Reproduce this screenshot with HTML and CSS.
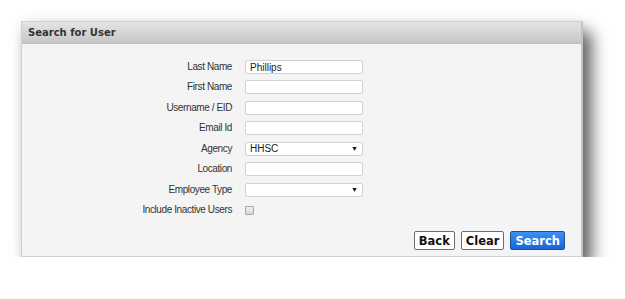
FILE: index.html
```html
<!DOCTYPE html>
<html>

<head>
    <title>Search for User</title>
    <link rel="stylesheet" href="styles.css">
</head>

<body>
    <div class="panel">
        <div class="panel-head">Search for User</div>
        <div class="panel-body">
            <form class="search-form">
                <label for="lastName">Last Name</label>
                <input type="text" id="lastName" value="Phillips">

                <label for="firstName">First Name</label>
                <input type="text" id="firstName">

                <label for="eid">Username / EID</label>
                <input type="text" id="eid">

                <label for="email">Email Id</label>
                <input type="text" id="email">

                <label for="agency">Agency</label>
                <div class="select" id="agency">HHSC<span class="arrow">&#9660;</span></div>

                <label for="location">Location</label>
                <input type="text" id="location">

                <label for="empType">Employee Type</label>
                <div class="select" id="empType"><span class="arrow">&#9660;</span></div>

                <label for="inactive">Include Inactive Users</label>
                <div class="check-cell"><span class="checkbox" id="inactive"></span></div>
            </form>
            <div class="actions">
                <button class="btn">Back</button>
                <button class="btn">Clear</button>
                <button class="btn btn-primary">Search</button>
            </div>
        </div>
    </div>
</body>

</html>
```

FILE: styles.css
```css
body {
    margin: 0;
    background-color: #fff;
    font-family: "Liberation Sans", Arial, sans-serif;
    color: #333;
}

.panel {
    margin: 21px 0 0 21px;
    width: 559px;
    border: 1px solid #d0d0d0;
    border-right: 2px solid #c4c4c4;
    background-color: #f4f4f4;
    box-shadow: 9px 11px 15px rgba(0, 0, 0, 0.6), 0 0 12px rgba(0, 0, 0, 0.08);
}

.panel-head {
    height: 21px;
    line-height: 21px;
    padding-left: 6px;
    background: linear-gradient(#e4e4e4, #c6c6c6);
    border-bottom: 1px solid #bdbdbd;
    font-family: "DejaVu Sans", Verdana, sans-serif;
    font-weight: bold;
    font-size: 10px;
    color: #333;
}

.panel-body {
    padding: 16px 16px 6px 0;
}

.search-form {
    display: grid;
    grid-template-columns: 210px 118px;
    grid-auto-rows: 20.43px;
    column-gap: 13px;
    align-items: start;
}

.search-form label {
    text-align: right;
    font-size: 10px;
    letter-spacing: -0.4px;
    line-height: 14px;
    color: #333;
}

.search-form input,
.select {
    box-sizing: border-box;
    width: 118px;
    height: 14px;
    margin: 0;
    padding: 0 4px;
    border: 1px solid #d2d2d2;
    border-radius: 2px;
    background-color: #fff;
    font-family: "Liberation Sans", Arial, sans-serif;
    font-size: 10px;
    line-height: 12px;
    color: #222;
}

.select {
    position: relative;
}

.arrow {
    position: absolute;
    right: 4px;
    top: 0;
    font-size: 7px;
    color: #111;
}

.checkbox {
    display: block;
    width: 7px;
    height: 7px;
    margin: 3px 0 0 0;
    border: 1px solid #a8a8a8;
    border-radius: 1px;
    background: linear-gradient(#eee, #d8d8d8);
}

.actions {
    display: flex;
    justify-content: flex-end;
    gap: 6px;
    margin-top: 8px;
}

.btn {
    height: 19px;
    padding: 0 4px;
    border: 1px solid #6d6d6d;
    border-radius: 2px;
    background-color: #fff;
    font-family: "DejaVu Sans", Verdana, sans-serif;
    font-weight: bold;
    font-size: 11.5px;
    color: #111;
}

.btn-primary {
    border-color: #1d4f9a;
    background: linear-gradient(#3d90f2, #1a64d6);
    color: #fff;
}
```
